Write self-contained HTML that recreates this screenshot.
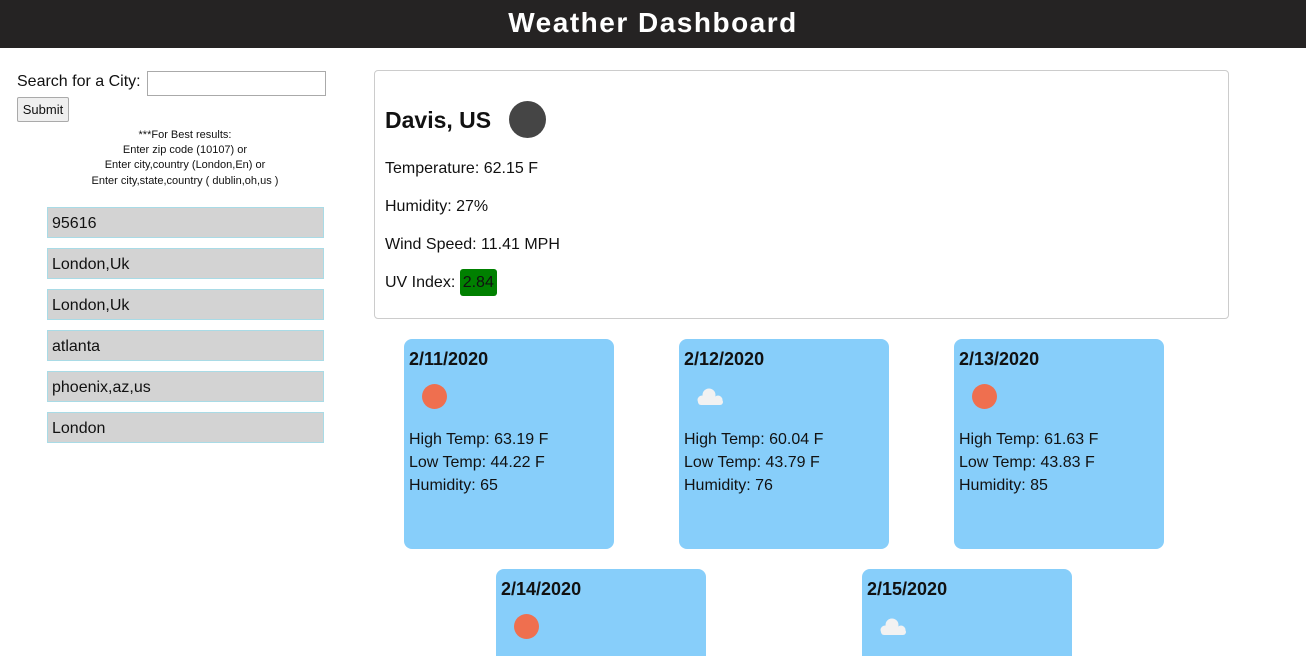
<!DOCTYPE html>
<html><head><meta charset="utf-8"><style>
*{box-sizing:border-box;margin:0;padding:0}
html,body{width:1306px;height:656px;overflow:hidden}
body{background:#fff;font-family:"Liberation Sans",sans-serif;color:#111;position:relative}
.hdr{position:absolute;left:0;top:0;width:1306px;height:48px;background:#252323;color:#fff;text-align:center;font-weight:bold;font-size:28px;line-height:46px;letter-spacing:1.5px}
.lbl{position:absolute;left:17px;top:73px;font-size:16px}
.inp{position:absolute;left:147px;top:71px;width:179px;height:25px;border:1px solid #aaa}
.btn{position:absolute;left:17px;top:97px;width:52px;height:25px;border:1px solid #aaa;background:#efefef;font-size:13px;text-align:center;line-height:23px;border-radius:2px}
.note{position:absolute;left:40px;top:128px;width:290px;text-align:center;font-size:11px;line-height:15.2px}
.item{position:absolute;left:47px;width:277px;height:31px;background:#d3d3d3;border:1px solid #a9dbe6;font-size:16px;padding-left:4px;line-height:31px}
.main{position:absolute;left:374px;top:70px;width:855px;height:249px;border:1px solid #ccc;border-radius:4px}
.main h1{position:absolute;left:10px;top:36px;font-size:23px;font-weight:bold}
.dot{position:absolute;left:134px;top:30px;width:37px;height:37px;border-radius:50%;background:#454545}
.ln{position:absolute;left:10px;font-size:16px}
.uv{background:#008000;padding:5px 3px;border-radius:3px}
.card{position:absolute;width:210px;height:210px;background:#87cefa;border-radius:8px;padding:8px 5px;overflow:hidden}
.card h2{font-size:18px;font-weight:bold;line-height:24px}
.sun{width:25px;height:25px;border-radius:50%;background:#ef6f4f;margin:13px 0 0 13px}
.cl{margin:13px 0 0 9px;height:25px}
.t{margin-top:19px;font-size:16px;line-height:23px}
.b{height:87px;border-radius:8px 8px 0 0}
</style></head><body>
<div class="hdr">Weather Dashboard</div>
<div class="lbl">Search for a City:</div>
<div class="inp"></div>
<div class="btn">Submit</div>
<div class="note">***For Best results:<br>Enter zip code (10107) or<br>Enter city,country (London,En) or<br>Enter city,state,country ( dublin,oh,us )</div>
<div class="item" style="top:207px">95616</div>
<div class="item" style="top:248px">London,Uk</div>
<div class="item" style="top:289px">London,Uk</div>
<div class="item" style="top:330px">atlanta</div>
<div class="item" style="top:371px">phoenix,az,us</div>
<div class="item" style="top:412px">London</div>
<div class="main">
<h1>Davis, US</h1><div class="dot"></div>
<div class="ln" style="top:89px">Temperature: 62.15 F</div>
<div class="ln" style="top:127px">Humidity: 27%</div>
<div class="ln" style="top:165px">Wind Speed: 11.41 MPH</div>
<div class="ln" style="top:203px">UV Index: <span class="uv">2.84</span></div>
</div>
<div class="card" style="left:404px;top:339px"><h2>2/11/2020</h2><div class="sun"></div><div class="t">High Temp: 63.19 F<br>Low Temp: 44.22 F<br>Humidity: 65</div></div>
<div class="card" style="left:679px;top:339px"><h2>2/12/2020</h2><div class="cl"><svg width="34" height="25" viewBox="0 0 34 25"><g fill="#f2f2f2"><circle cx="16" cy="11" r="6.5"/><circle cx="9" cy="16" r="4.5"/><circle cx="25" cy="16" r="4.5"/><rect x="5" y="15" width="25" height="6" rx="3"/></g></svg></div><div class="t">High Temp: 60.04 F<br>Low Temp: 43.79 F<br>Humidity: 76</div></div>
<div class="card" style="left:954px;top:339px"><h2>2/13/2020</h2><div class="sun"></div><div class="t">High Temp: 61.63 F<br>Low Temp: 43.83 F<br>Humidity: 85</div></div>
<div class="card b" style="left:496px;top:569px"><h2>2/14/2020</h2><div class="sun"></div></div>
<div class="card b" style="left:862px;top:569px"><h2>2/15/2020</h2><div class="cl"><svg width="34" height="25" viewBox="0 0 34 25"><g fill="#f2f2f2"><circle cx="16" cy="11" r="6.5"/><circle cx="9" cy="16" r="4.5"/><circle cx="25" cy="16" r="4.5"/><rect x="5" y="15" width="25" height="6" rx="3"/></g></svg></div></div>
</body></html>
